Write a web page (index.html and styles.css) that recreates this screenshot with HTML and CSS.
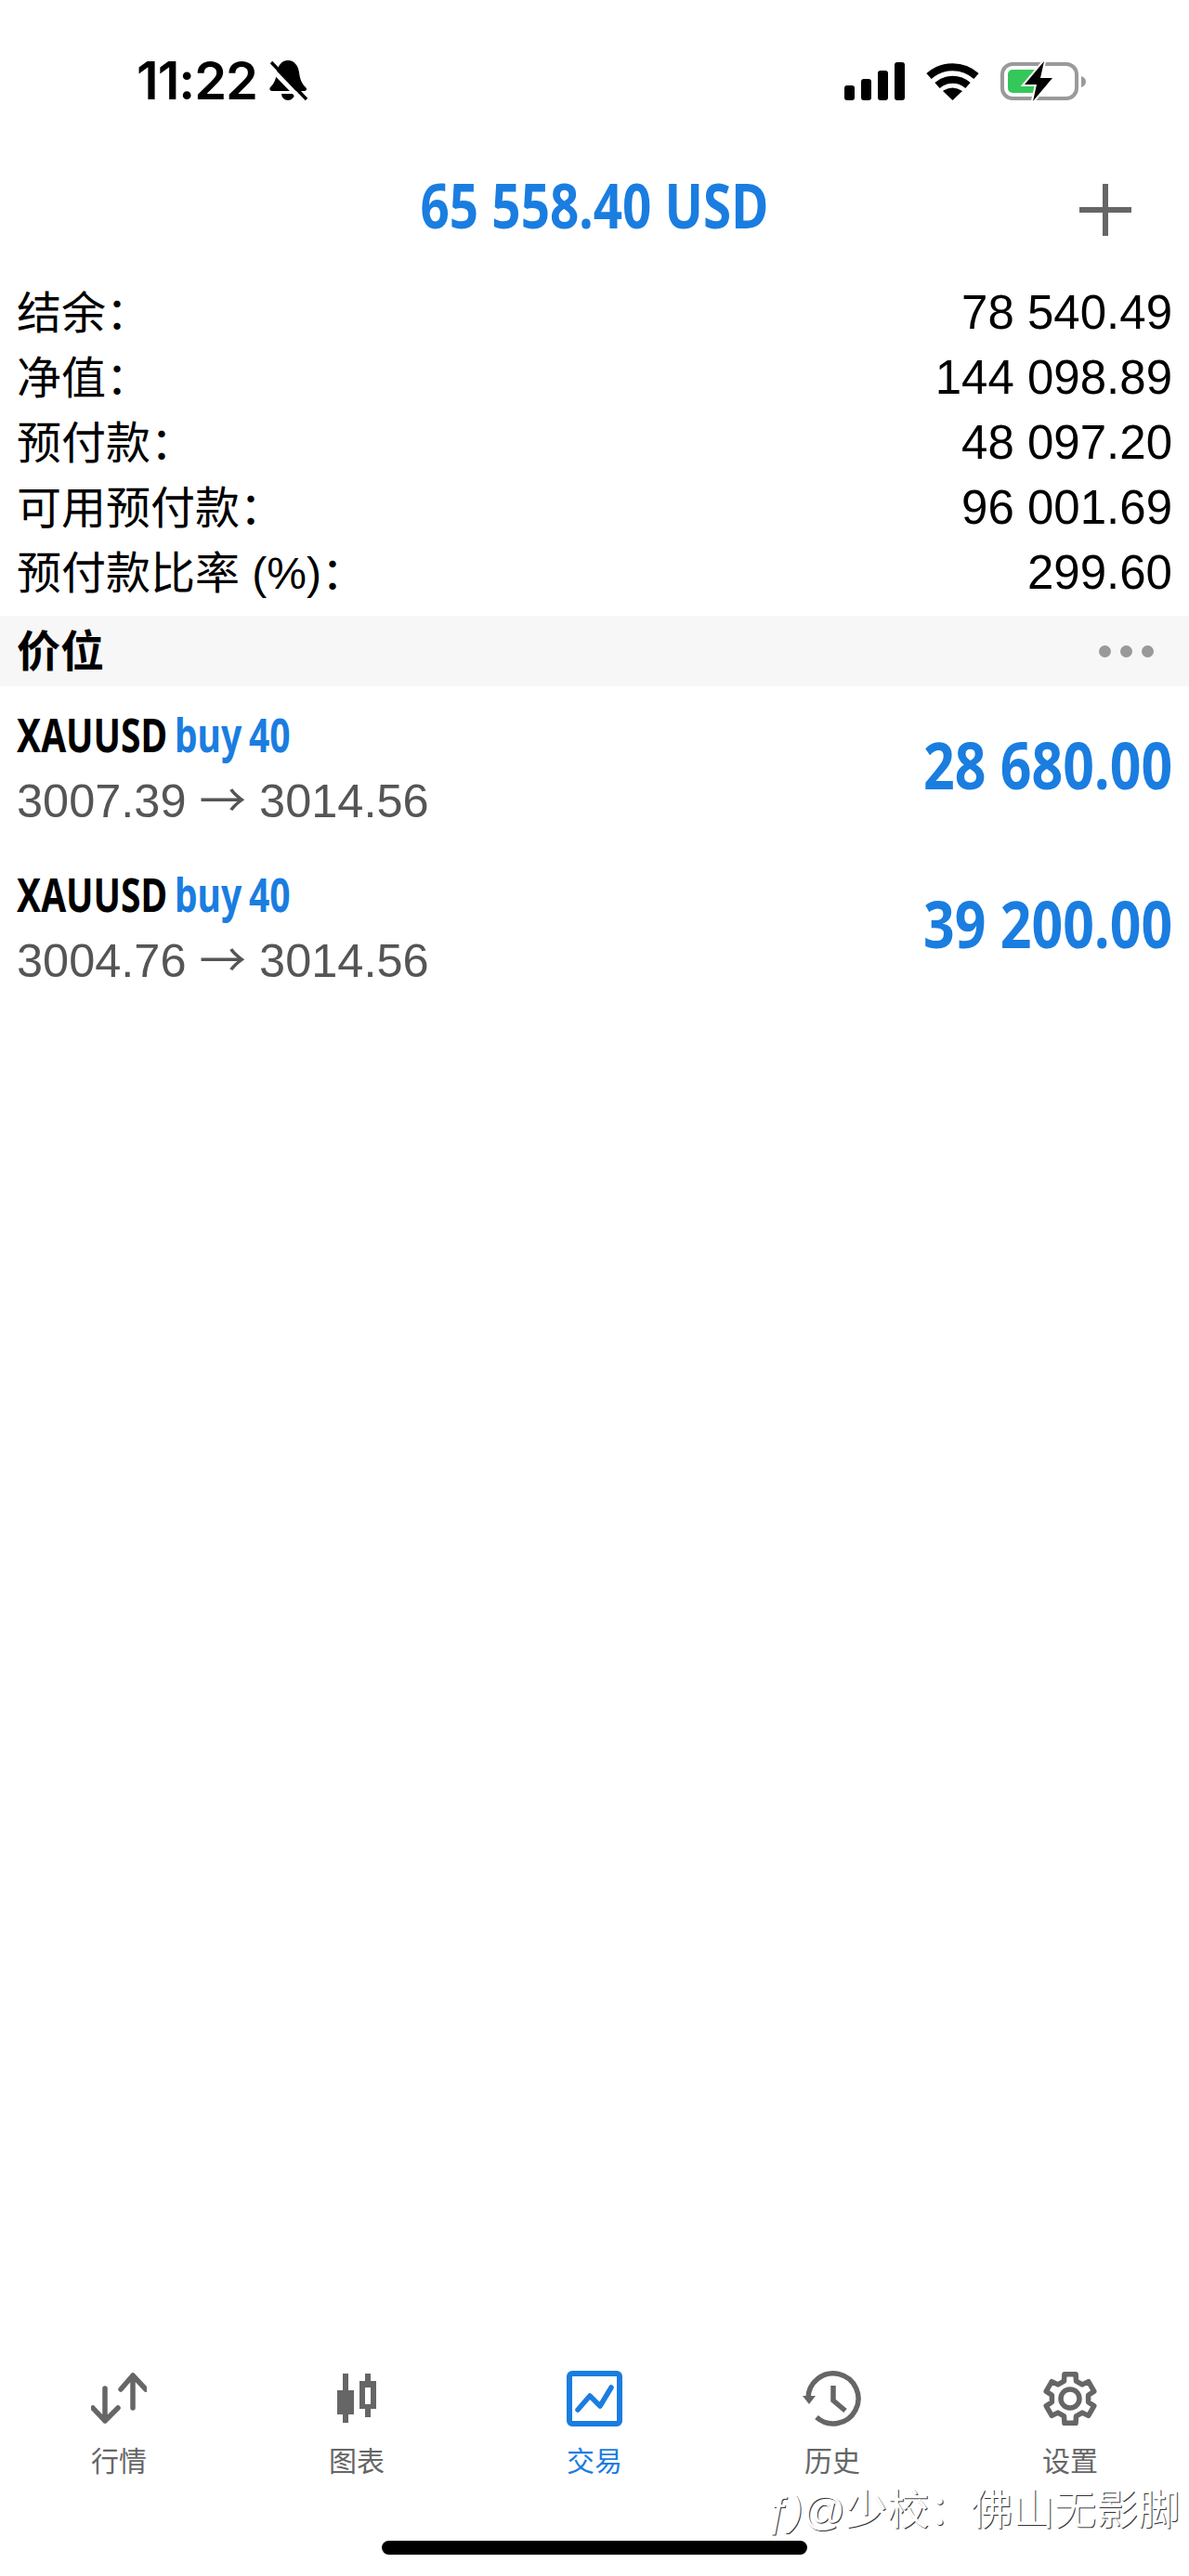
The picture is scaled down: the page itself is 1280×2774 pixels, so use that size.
FILE: index.html
```html
<!DOCTYPE html>
<html lang="zh-CN">
<head>
  <meta charset="UTF-8">
  <meta name="viewport" content="width=device-width, initial-scale=1.0">
  <title>交易</title>
  <link rel="stylesheet" href="styles.css">
</head>
<body>
  <div class="status-bar">
    <div class="status-left">
      <span class="clock">11:22</span>
      <svg class="bell" viewBox="0 0 42 44">
        <path d="M20 0C13 0 9 6 8 13C7 21 5 25 1 29C0 30 0 33 3 33H37C40 33 41 31 39 29C35 25 33 21 32 13C31 6 27 0 20 0Z"/>
        <path d="M13 36a7 7 0 0 0 14 0Z"/>
        <path d="M-1 6L37 45" stroke="#fff" stroke-width="5" fill="none"/>
        <path d="M2 2L40 42" stroke="#000" stroke-width="3.5" fill="none"/>
      </svg>
    </div>
    <div class="status-right">
      <svg class="signal" viewBox="0 0 65 41">
        <rect x="0" y="25" width="11" height="16" rx="3"/>
        <rect x="18" y="18" width="11" height="23" rx="3"/>
        <rect x="36" y="9" width="11" height="32" rx="3"/>
        <rect x="54" y="0" width="11" height="41" rx="3"/>
      </svg>
      <svg class="wifi" viewBox="0 0 57 41">
        <path d="M3 15A38 38 0 0 1 54 15" fill="none" stroke="#000" stroke-width="8"/>
        <path d="M12 25A25 25 0 0 1 45 25" fill="none" stroke="#000" stroke-width="8"/>
        <path d="M18 31Q28.5 24 39 31L28.5 41Z"/>
      </svg>
      <svg class="battery" viewBox="0 0 92 43">
        <rect x="2" y="3" width="80" height="37" rx="11" fill="#fff" stroke="#9a9a9a" stroke-width="4"/>
        <rect x="8" y="9" width="34" height="25" rx="5" fill="#34c759"/>
        <path d="M87 16C90 17 92 19 92 22C92 25 90 27 87 28Z" fill="#9a9a9a"/>
        <path d="M47 0L26 25H39L35 43L56 18H43Z" stroke="#fff" stroke-width="4" paint-order="stroke"/>
      </svg>
    </div>
  </div>

  <header class="top-bar">
    <div class="balance">65 558.40 USD</div>
    <svg class="plus" viewBox="0 0 56 56"><path d="M28 0V56M0 28H56" stroke="#666" stroke-width="6" fill="none"/></svg>
  </header>

  <div class="summary">
    <div class="summary-row"><span class="label">结余：</span><span class="amount">78 540.49</span></div>
    <div class="summary-row"><span class="label">净值：</span><span class="amount">144 098.89</span></div>
    <div class="summary-row"><span class="label">预付款：</span><span class="amount">48 097.20</span></div>
    <div class="summary-row"><span class="label">可用预付款：</span><span class="amount">96 001.69</span></div>
    <div class="summary-row"><span class="label">预付款比率 (%)：</span><span class="amount">299.60</span></div>
  </div>

  <div class="section-bar">
    <span class="label">价位</span>
    <div class="dots"><i></i><i></i><i></i></div>
  </div>

  <main class="positions">
    <div class="position">
      <div class="position-info">
        <div class="symbol">XAUUSD <span class="side">buy 40</span></div>
        <div class="prices">3007.39 <span class="arrow">→</span> 3014.56</div>
      </div>
      <div class="profit">28 680.00</div>
    </div>
    <div class="position">
      <div class="position-info">
        <div class="symbol">XAUUSD <span class="side">buy 40</span></div>
        <div class="prices">3004.76 <span class="arrow">→</span> 3014.56</div>
      </div>
      <div class="profit">39 200.00</div>
    </div>
  </main>

  <nav class="tabs">
    <div class="tab">
      <svg class="tab-icon" viewBox="0 0 60 60" fill="none" stroke="#666" stroke-width="5.5" stroke-linecap="round" stroke-linejoin="round">
        <path d="M15 19V54M2 40L15 54L29 40"/>
        <path d="M45 40V5M32 20L45 5L59 20"/>
      </svg>
      <span>行情</span>
    </div>
    <div class="tab">
      <svg class="tab-icon" viewBox="0 0 42 60" fill="#666">
        <path d="M6 3H12V21H18V47H12V56H6V47H0V21H6Z"/>
        <path fill-rule="evenodd" d="M30 3H36V11H42V41H36V50H30V41H24V11H30ZM30 18V36H36V18Z"/>
      </svg>
      <span>图表</span>
    </div>
    <div class="tab active">
      <svg class="tab-icon" viewBox="0 0 60 60" fill="none" stroke="#1a7de0" stroke-linejoin="round" stroke-linecap="round">
        <rect x="3" y="3" width="54" height="54" rx="3" stroke-width="6"/>
        <path d="M12 42L25 27L36 38L48 18" stroke-width="5.5"/>
      </svg>
      <span>交易</span>
    </div>
    <div class="tab">
      <svg class="tab-icon" viewBox="0 0 64 60" fill="none" stroke="#666" stroke-width="5.5">
        <path d="M6 30A27 27 0 1 1 15 50"/>
        <path d="M33 16V32L46 43"/>
        <path d="M0 27H14L7 36Z" fill="#666" stroke="none"/>
      </svg>
      <span>历史</span>
    </div>
    <div class="tab">
      <svg class="tab-icon" viewBox="0 0 60 60" fill="none" stroke="#666" stroke-width="5.5" stroke-linejoin="round">
        <path d="M23.9 3.7H36.1L36.5 11.1L43.1 14.9L49.7 11.6L55.8 22.1L49.6 26.2V33.8L55.8 37.9L49.7 48.4L43.1 45.1L36.5 48.9L36.1 56.3H23.9L23.5 48.9L16.9 45.1L10.3 48.4L4.2 37.9L10.4 33.8V26.2L4.2 22.1L10.3 11.6L16.9 14.9L23.5 11.1Z"/>
        <circle cx="30" cy="30" r="10"/>
      </svg>
      <span>设置</span>
    </div>
  </nav>

  <div class="home-area"><div class="home-bar"></div></div>

  <div class="watermark"><i>ƒ)</i>@少校：佛山无影脚</div>
</body>
</html>
```

FILE: styles.css
```css
* {
  box-sizing: border-box;
}
html, body {
  margin: 0;
  height: 2774px;
}
body {
  position: relative;
  display: flex;
  flex-direction: column;
  overflow: hidden;
  background-color: #fff;
  color: #000;
  font-family: "Liberation Sans", "Noto Sans CJK SC", sans-serif;
}
.status-bar {
  display: flex;
  justify-content: space-between;
  align-items: center;
  height: 174px;
  padding: 0 111px 0 147px;
}
.status-left {
  display: flex;
  align-items: center;
  gap: 13px;
}
.clock {
  font-family: Inter, sans-serif;
  font-size: 56px;
  font-weight: 600;
  letter-spacing: -1px;
}
.bell {
  width: 42px;
  height: 44px;
}
.status-right {
  display: flex;
  align-items: center;
  gap: 23px;
}
.signal {
  width: 65px;
  height: 41px;
}
.wifi {
  width: 57px;
  height: 41px;
}
.battery {
  width: 92px;
  height: 43px;
}
.top-bar {
  position: relative;
  display: flex;
  justify-content: center;
  align-items: center;
  height: 98px;
}
.balance {
  padding-bottom: 6px;
  font-family: "Noto Sans", sans-serif;
  font-size: 66px;
  font-weight: 700;
  color: #1a7de0;
  transform: scaleX(0.83);
}
.plus {
  position: absolute;
  right: 62px;
  top: 24px;
  width: 56px;
  height: 56px;
}
.summary {
  padding: 29px 18px 12px 18px;
}
.summary-row {
  display: flex;
  justify-content: space-between;
  align-items: center;
  height: 70px;
  font-size: 48px;
}
.label {
  padding-bottom: 7px;
}
.amount {
  font-size: 51px;
}
.section-bar {
  display: flex;
  justify-content: space-between;
  align-items: center;
  height: 76px;
  padding: 0 38px 0 18px;
  background-color: #f7f7f7;
  font-size: 47px;
  font-weight: 700;
}
.dots {
  display: flex;
  gap: 10px;
}
.dots i {
  width: 13px;
  height: 13px;
  border-radius: 50%;
  background-color: #999;
}
.positions {
  flex: 1;
}
.position {
  display: flex;
  justify-content: space-between;
  align-items: center;
  height: 171.6px;
  padding: 5px 18px 0 18px;
}
.symbol {
  height: 71px;
  line-height: 69px;
  font-family: "Noto Sans", sans-serif;
  font-size: 50px;
  font-weight: 700;
  word-spacing: -3px;
  transform: scaleX(0.78);
  transform-origin: left center;
}
.side {
  color: #1a7de0;
}
.prices {
  height: 69px;
  line-height: 69px;
  font-size: 50.5px;
  color: #555;
}
.arrow {
  font-family: "Noto Sans CJK SC", sans-serif;
  line-height: 1;
}
.profit {
  font-family: "Noto Sans", sans-serif;
  font-size: 70px;
  font-weight: 700;
  color: #1a7de0;
  padding-bottom: 9px;
  transform: scaleX(0.843);
  transform-origin: right center;
}
.tabs {
  display: grid;
  grid-template-columns: repeat(5, 1fr);
  height: 183px;
}
.tab {
  display: flex;
  flex-direction: column;
  align-items: center;
  font-size: 30px;
  color: #666;
}
.tab.active {
  color: #1a7de0;
}
.tab-icon {
  height: 60px;
  margin-bottom: 13px;
}
.home-area {
  display: flex;
  justify-content: center;
  height: 38px;
}
.home-bar {
  width: 458px;
  height: 15px;
  border-radius: 8px;
  background-color: #000;
}
.watermark {
  position: absolute;
  right: 10px;
  bottom: 42px;
  color: #fff;
  font-size: 45px;
  text-shadow: 1px 1px 0 #333;
}
```
